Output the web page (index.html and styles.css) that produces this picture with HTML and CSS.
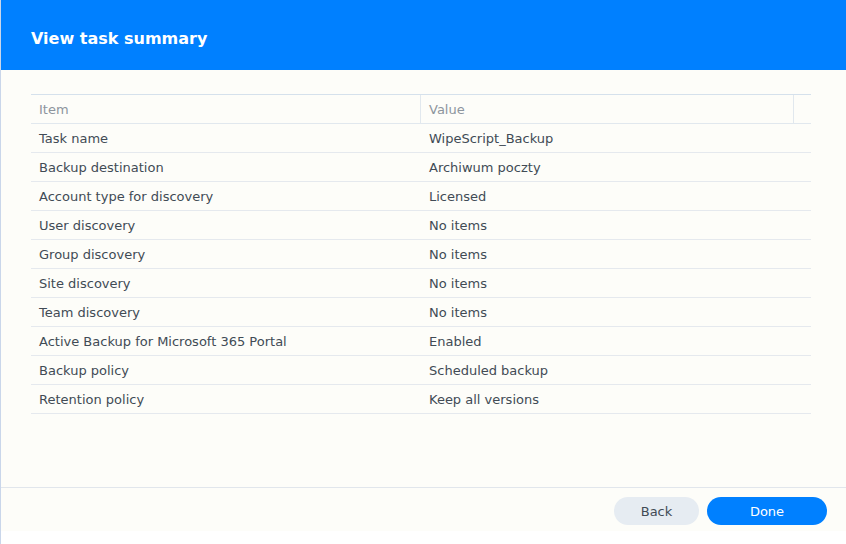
FILE: index.html
```html
<!DOCTYPE html>
<html>
<head>
<meta charset="utf-8">
<link rel="stylesheet" href="styles.css">
</head>
<body>
<div class="dialog">
  <div class="header"><h1 class="title">View task summary</h1></div>
  <div class="main">
    <div class="grid">
      <div class="row head">
        <div class="c1">Item</div>
        <div class="c2">Value</div>
        <div class="c3"></div>
      </div>
      <div class="row"><div class="c1">Task name</div><div class="c2">WipeScript_Backup</div></div>
      <div class="row"><div class="c1">Backup destination</div><div class="c2">Archiwum poczty</div></div>
      <div class="row"><div class="c1">Account type for discovery</div><div class="c2">Licensed</div></div>
      <div class="row"><div class="c1">User discovery</div><div class="c2">No items</div></div>
      <div class="row"><div class="c1">Group discovery</div><div class="c2">No items</div></div>
      <div class="row"><div class="c1">Site discovery</div><div class="c2">No items</div></div>
      <div class="row"><div class="c1">Team discovery</div><div class="c2">No items</div></div>
      <div class="row"><div class="c1">Active Backup for Microsoft 365 Portal</div><div class="c2">Enabled</div></div>
      <div class="row"><div class="c1">Backup policy</div><div class="c2">Scheduled backup</div></div>
      <div class="row"><div class="c1">Retention policy</div><div class="c2">Keep all versions</div></div>
    </div>
  </div>
  <div class="footer">
    <button class="btn back">Back</button>
    <button class="btn done">Done</button>
  </div>
  <div class="bottom"></div>
</div>
</body>
</html>
```
FILE: styles.css
```css
html, body {
  margin: 0;
  padding: 0;
  background: #ffffff;
}
body {
  font-family: "DejaVu Sans", Verdana, sans-serif;
  font-size: 13px;
  color: #414b55;
}
.dialog {
  width: 846px;
  height: 544px;
  box-sizing: border-box;
  border-left: 1px solid #c9d6ea;
  display: flex;
  flex-direction: column;
  background: #fdfdf9;
}
.header {
  height: 70px;
  flex: none;
  background: #0080ff;
  display: flex;
  align-items: center;
  padding-left: 30px;
}
.title {
  margin: 0;
  color: #ffffff;
  font-size: 16px;
  font-weight: bold;
  padding-top: 6px;
}
.main {
  height: 417px;
  flex: none;
  box-sizing: border-box;
  padding: 24px 35px 0 30px;
}
.grid {
  border-top: 1px solid #d5e1ec;
}
.row {
  display: flex;
  height: 29px;
  box-sizing: border-box;
  border-bottom: 1px solid #e5e9ee;
  align-items: center;
}
.row > div {
  height: 100%;
  display: flex;
  align-items: center;
  box-sizing: border-box;
}
.c1 {
  width: 390px;
  padding-left: 8px;
  flex: none;
}
.c2 {
  flex: 1;
  padding-left: 8px;
}
.head {
  color: #8d959e;
  border-bottom-color: #e1e8ee;
}
.head .c1 {
  border-right: 1px solid #e1e8ee;
}
.head .c2 {
  flex: none;
  width: 373px;
  border-right: 1px solid #e1e8ee;
}
.head .c3 {
  flex: 1;
}
.footer {
  height: 44px;
  flex: none;
  box-sizing: border-box;
  border-top: 1px solid #e1e6ec;
  display: flex;
  justify-content: flex-end;
  align-items: flex-start;
  padding: 9px 19px 0 0;
  gap: 8px;
}
.btn {
  height: 28px;
  border: none;
  border-radius: 14px;
  font-family: "DejaVu Sans", Verdana, sans-serif;
  font-size: 13px;
  padding: 0;
  cursor: pointer;
}
.back {
  width: 85px;
  background: #e6ecf2;
  color: #414b55;
}
.done {
  width: 120px;
  background: #0080ff;
  color: #ffffff;
  font-weight: 500;
}
.bottom {
  flex: 1;
  background: #ffffff;
}
```
